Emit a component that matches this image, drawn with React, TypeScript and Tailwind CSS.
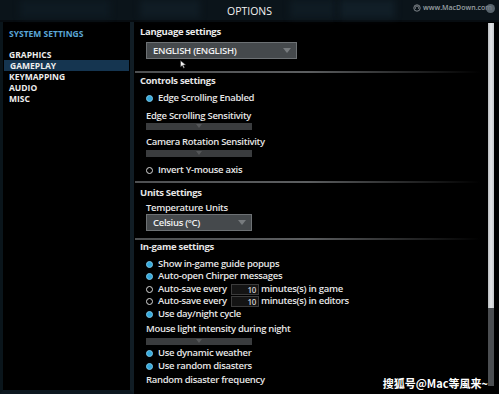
import React from "react";

const font = { fontFamily: '"Open Sans", "Noto Sans CJK SC", sans-serif' };

function Radio({ on }: { on: boolean }) {
  return on ? (
    <span className="w-[7px] h-[7px] rounded-full bg-[#34a9dc] border border-[#7cc6e6] shrink-0" />
  ) : (
    <span className="w-[7px] h-[7px] rounded-full bg-black border-[1.5px] border-[#d8d8d8] shrink-0" />
  );
}

function Opt({ on, label, mt }: { on: boolean; label: string; mt: string }) {
  return (
    <div className={`flex items-center h-[12px] pl-[6px] gap-[5px] whitespace-nowrap ${mt}`}>
      <Radio on={on} />
      <span className="leading-[12px]">{label}</span>
    </div>
  );
}

function Sep({ mt }: { mt: string }) {
  return <div className={`-ml-[5px] h-[2px] w-[345px] bg-gradient-to-r from-[#4e5052] via-[#5c5e60] to-transparent ${mt}`} />;
}

function Slider({ mt }: { mt: string }) {
  return (
    <div className={`ml-[6px] w-[106px] h-[7px] bg-[#3a3c3e] relative ${mt}`}>
      <div className="absolute left-[50px] top-[1px] w-0 h-0 border-l-[3px] border-r-[3px] border-t-[4px] border-l-transparent border-r-transparent border-t-[#555759]" />
    </div>
  );
}

function Dropdown({ label, w, mt }: { label: string; w: string; mt: string }) {
  return (
    <div className={`ml-[6px] ${w} h-[17px] bg-[#45494c] border border-[#6d7174] flex items-center justify-between pl-[6px] pr-[5px] ${mt}`}>
      <span className="text-[9.5px] text-[#f0f0f0] leading-[12px]">{label}</span>
      <span className="w-0 h-0 border-l-[4px] border-r-[4px] border-t-[5px] border-l-transparent border-r-transparent border-t-[#777b7e]" />
    </div>
  );
}

function AutoSave({ suffix, mt }: { suffix: string; mt: string }) {
  return (
    <div className={`flex items-center h-[12px] pl-[6px] gap-[5px] whitespace-nowrap ${mt}`}>
      <Radio on={false} />
      <span className="leading-[12px] w-[68px]">Auto-save every</span>
      <span className="w-[28px] h-[11px] shrink-0 bg-[#141414] border border-[#3c3c3c] text-right pr-[2px] text-[8px] leading-[9px] text-[#cfcfcf]">10</span>
      <span className="leading-[12px] -ml-[3px]">{suffix}</span>
    </div>
  );
}

export default function App() {
  return (
    <div style={font} className="w-[499px] h-[394px] bg-black overflow-hidden flex flex-col text-[#e6e6e6] relative">
      {/* top bar */}
      <div className="h-[20px] shrink-0 bg-[#0b141a] flex items-center justify-center relative">
        <div className="absolute left-[20px] top-0 w-[90px] h-[18px] bg-[#0e1a22] blur-[3px]" />
        <div className="absolute left-[140px] top-0 w-[60px] h-[18px] bg-[#101c24] blur-[3px]" />
        <div className="absolute left-[290px] top-0 w-[45px] h-[18px] bg-[#0f1b23] blur-[3px]" />
        <div className="absolute left-[340px] top-0 w-[55px] h-[18px] bg-[#111e27] blur-[3px]" />
        <span className="relative text-[10.5px] text-[#f2f2f2] leading-[14px] mt-[1px]">OPTIONS</span>
        <div className="absolute right-[4px] top-[3px] flex items-center gap-[2px] text-[7px] text-[#9aa0a4] font-semibold leading-[10px]">
          <svg width="8" height="8" viewBox="0 0 10 10" fill="none" stroke="#9aa0a4" strokeWidth="1">
            <circle cx="5" cy="5" r="4" />
            <path d="M3 6 V4.5 A2 2 0 0 1 7 4.5 V6" />
          </svg>
          <span>www.MacDown.com</span>
          <span className="w-[9px] h-[9px] rounded-full bg-[#6c7882] -ml-[8px] opacity-80" />
        </div>
      </div>
      <div className="h-[2px] shrink-0 bg-[#070c10]" />

      {/* body */}
      <div className="flex flex-1 min-h-0">
        {/* sidebar */}
        <div className="w-[134px] shrink-0 border-l-[3px] border-l-[#0a151b] border-r-[4px] border-r-[#111d25] border-b-[4px] border-b-[#0d1820] flex flex-col pt-[6px]">
          <div className="pl-[6px] text-[8.5px] font-bold text-[#5aa6d6] leading-[11px]">SYSTEM SETTINGS</div>
          <div className="mt-[10px] flex flex-col text-[8.5px] font-bold text-[#eeeeee] leading-[11px]">
            <div className="pl-[6px] h-[11px]">GRAPHICS</div>
            <div className="pl-[6px] h-[11px] bg-[#153550] mx-[1px]">GAMEPLAY</div>
            <div className="pl-[6px] h-[11px]">KEYMAPPING</div>
            <div className="pl-[6px] h-[11px]">AUDIO</div>
            <div className="pl-[6px] h-[11px]">MISC</div>
          </div>
        </div>

        {/* main */}
        <div className="flex-1 flex min-w-0">
          <div className="flex-1 flex flex-col pl-[6px] pt-[4px] text-[9.5px] font-semibold tracking-[-0.3px] relative">
            <div className="h-[12px] leading-[12px] font-bold text-[#ececec]">Language settings</div>
            <Dropdown label="ENGLISH (ENGLISH)" w="w-[151px]" mt="mt-[4px]" />
            <svg className="absolute left-[46px] top-[38px]" width="7" height="9" viewBox="0 0 7 9">
              <path d="M0.5 0.5 L0.5 7 L2.3 5.5 L3.6 8.3 L4.6 7.8 L3.4 5.1 L5.8 5 Z" fill="#f4f4f4" stroke="#222" strokeWidth="0.5" />
            </svg>
            <Sep mt="mt-[12px]" />
            <div className="h-[12px] leading-[12px] font-bold mt-[2px]">Controls settings</div>
            <Opt on label="Edge Scrolling Enabled" mt="mt-[5px]" />
            <div className="h-[12px] leading-[12px] pl-[6px] mt-[6px]">Edge Scrolling Sensitivity</div>
            <Slider mt="mt-[1px]" />
            <div className="h-[12px] leading-[12px] pl-[6px] mt-[6px]">Camera Rotation Sensitivity</div>
            <Slider mt="mt-[2px]" />
            <Opt on={false} label="Invert Y-mouse axis" mt="mt-[7px]" />
            <Sep mt="mt-[5px]" />
            <div className="h-[12px] leading-[12px] font-bold mt-[4px]">Units Settings</div>
            <div className="h-[12px] leading-[12px] pl-[6px] mt-[3px]">Temperature Units</div>
            <Dropdown label="Celsius (°C)" w="w-[106px]" mt="mt-[0px]" />
            <Sep mt="mt-[7px]" />
            <div className="h-[12px] leading-[12px] font-bold mt-[1px]">In-game settings</div>
            <Opt on label="Show in-game guide popups" mt="mt-[5px]" />
            <Opt on label="Auto-open Chirper messages" mt="mt-[0px]" />
            <AutoSave suffix="minutes(s) in game" mt="mt-[1px]" />
            <AutoSave suffix="minutes(s) in editors" mt="mt-[0px]" />
            <Opt on label="Use day/night cycle" mt="mt-[1px]" />
            <div className="h-[12px] leading-[12px] pl-[6px] mt-[3px]">Mouse light intensity during night</div>
            <Slider mt="mt-[3px]" />
            <Opt on label="Use dynamic weather" mt="mt-[2px]" />
            <Opt on label="Use random disasters" mt="mt-[1px]" />
            <div className="h-[12px] leading-[12px] pl-[6px] mt-[2px]">Random disaster frequency</div>
          </div>
          {/* scrollbar */}
          <div className="w-[6px] shrink-0 mr-[5px] mt-[1px] mb-[8px] flex flex-col">
            <div className="h-[285px] bg-gradient-to-r from-[#b9bcbf] via-[#e4e6e8] to-[#c4c7ca]" />
            <div className="flex-1 bg-[#4b4e51]" />
          </div>
        </div>
      </div>

      <div
        className="absolute right-[11px] bottom-[4px] text-[11px] text-white font-semibold leading-[14px]"
        style={{ fontFamily: '"Noto Sans CJK SC", "Open Sans", sans-serif', textShadow: "0 0 2px #000" }}
      >
        搜狐号@Mac等風来~
      </div>
    </div>
  );
}
